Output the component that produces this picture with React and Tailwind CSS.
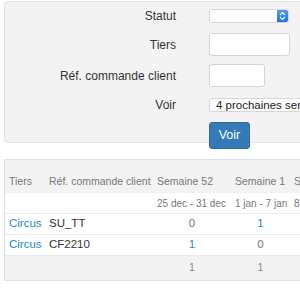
import React from 'react'

const cols = 'grid grid-cols-[40px_108px_78px_59px_80px]'

const rows = [
  { tiers: 'Circus', ref: 'SU_TT', vals: [0, 1, 0] },
  { tiers: 'Circus', ref: 'CF2210', vals: [1, 0, 0] },
]

function Num({ v }) {
  return <div className={`text-center ${v ? 'text-[#2a88c8]' : 'text-[#777]'}`}>{v}</div>
}

function FormRow({ label, children, className = '' }) {
  return (
    <div className={`flex items-center ${className}`}>
      <div className="w-[171px] text-right text-[12px] text-[#333]">{label}</div>
      <div className="ml-[33px] flex">{children}</div>
    </div>
  )
}

export default function App() {
  return (
    <div className="w-[300px] h-[300px] overflow-hidden bg-white font-['Liberation_Sans',Arial,sans-serif]">
      <div className="ml-[4px] mt-[1px] w-[330px] h-[142px] pt-[5px] bg-[#f3f3f3] border border-[#e3e3e3] rounded-[4px]">
        <FormRow label="Statut">
          <div className="w-[80px] h-[14px] flex bg-white border border-[#d6d6d6] rounded-[3px] overflow-hidden">
            <div className="flex-1" />
            <div className="w-[11px] h-full bg-gradient-to-b from-[#4c9bf7] to-[#1e6fe3] flex items-center justify-center">
              <svg width="7" height="10" viewBox="0 0 7 10" fill="none" stroke="white" strokeWidth="1.2">
                <path d="M1 4 L3.5 1.5 L6 4" />
                <path d="M1 6 L3.5 8.5 L6 6" />
              </svg>
            </div>
          </div>
        </FormRow>
        <FormRow label="Tiers" className="mt-[8px]">
          <div className="w-[81px] h-[23px] bg-white border border-[#d4d4d4] rounded-[3px]" />
        </FormRow>
        <FormRow label="Réf. commande client" className="mt-[8px]">
          <div className="w-[56px] h-[23px] bg-white border border-[#d4d4d4] rounded-[3px]" />
        </FormRow>
        <FormRow label="Voir" className="mt-[9px]">
          <div className="w-[115px] h-[14px] pl-[6px] bg-white border border-[#d6d6d6] rounded-[3px] text-[11.5px] leading-[12px] text-[#222] whitespace-nowrap overflow-hidden">
            4 prochaines semaines
          </div>
        </FormRow>
        <FormRow label="" className="mt-[8px]">
          <button className="w-[41px] h-[27px] bg-[#337ab7] border border-[#2e6da4] rounded-[3px] text-white text-[12.5px]">
            Voir
          </button>
        </FormRow>
      </div>

      <div className="ml-[4px] mt-[16px] w-[380px] border border-[#e0e0e0]">
        <div className={`${cols} h-[33px] items-end pb-[6px] bg-[#f3f3f3] text-[10.5px] leading-[12px] text-[#777] whitespace-nowrap`}>
          <div className="pl-[4px]">Tiers</div>
          <div className="pl-[4px]">Réf. commande client</div>
          <div className="pl-[4px]">Semaine 52</div>
          <div className="pl-[4px]">Semaine 1</div>
          <div className="pl-[4px]">Semaine 2</div>
        </div>
        <div className={`${cols} h-[21px] items-center border-b border-[#ebebeb] text-[10px] text-[#777] whitespace-nowrap`}>
          <div />
          <div />
          <div className="pl-[4px]">25 dec - 31 dec</div>
          <div className="pl-[4px]">1 jan - 7 jan</div>
          <div className="pl-[4px]">8 jan - 14 jan</div>
        </div>
        {rows.map((r, i) => (
          <div key={i} className={`${cols} h-[21px] items-center border-b border-[#ebebeb] text-[11.5px] whitespace-nowrap`}>
            <div className="pl-[4px] text-[#2a88c8]">{r.tiers}</div>
            <div className="pl-[4px] text-[#333]">{r.ref}</div>
            {r.vals.map((v, j) => <Num key={j} v={v} />)}
          </div>
        ))}
        <div className={`${cols} h-[24px] items-center bg-[#f3f3f3] text-[10.5px] text-[#888]`}>
          <div />
          <div />
          <div className="text-center">1</div>
          <div className="text-center">1</div>
          <div className="text-center">0</div>
        </div>
      </div>
    </div>
  )
}
